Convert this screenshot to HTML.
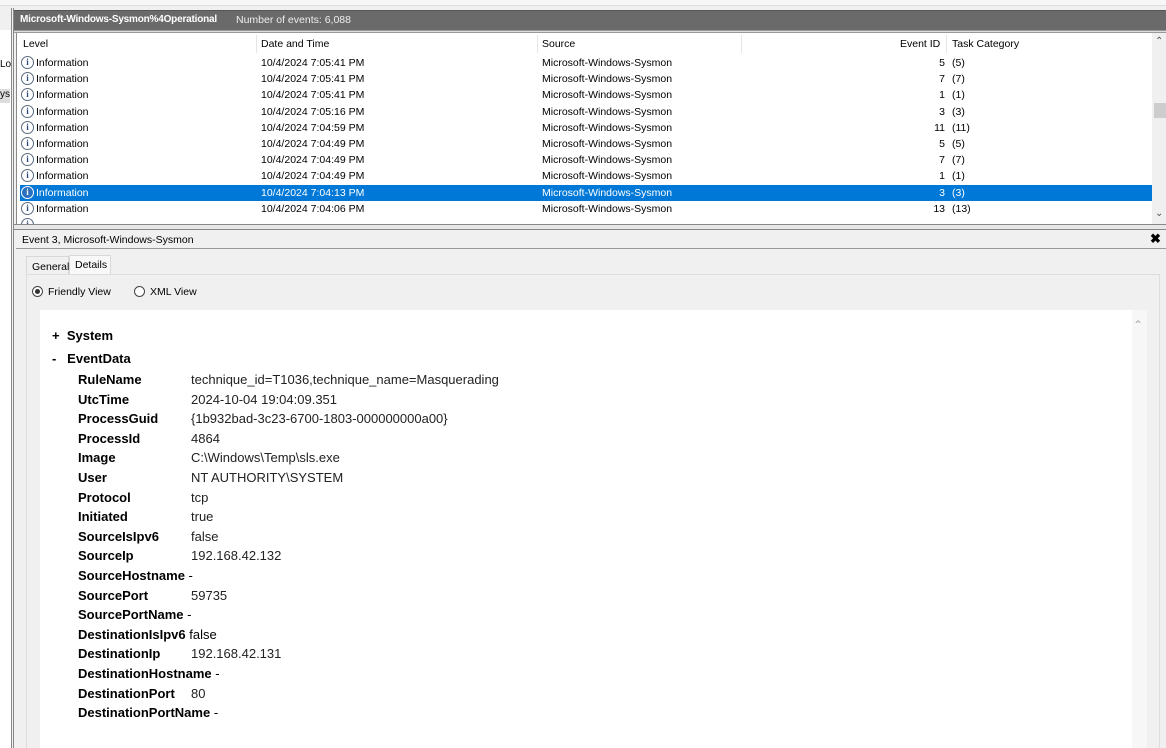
<!DOCTYPE html>
<html><head><style>
*{margin:0;padding:0;box-sizing:border-box}
html,body{width:1166px;height:748px;overflow:hidden}
body{background:#f0f0f0;font-family:"Liberation Sans",sans-serif;position:relative;color:#000}
.a{position:absolute;white-space:nowrap}
.row{position:absolute;left:20px;width:1132px;height:16px;font-size:10.5px;line-height:16px}
.row span{position:absolute}
.ic{position:absolute;left:1px;top:1px;width:13px;height:13px;border:1px solid #5a6a80;border-radius:50%;background:#fff;font:bold 9px/11px "Liberation Serif",serif;text-align:center;color:#2a4a80}
.sel{background:#0078d7;color:#fff}
.sel .ic{background:#2a70c0;border-color:#fff;color:#fff}
.k{position:absolute;left:78px;font-weight:bold;font-size:13px}
.v{position:absolute;left:191px;font-size:13px;color:#222}
</style></head><body>
<div class="a" style="left:0;top:0;width:1166px;height:6px;background:#f7f7f7;border-bottom:1px solid #ddd"></div>
<div class="a" style="left:0;top:30px;width:12px;height:718px;background:#fff"></div>
<div class="a" style="left:0;top:59px;font-size:10px">Lo</div>
<div class="a" style="left:0;top:89px;width:10px;height:14px;background:#ddd;font-size:10px;overflow:hidden">ysr</div>
<div class="a" style="left:11px;top:8px;width:3px;height:740px;border-left:1px solid #888;border-right:1px solid #888"></div>
<div class="a" style="left:14px;top:10px;width:1152px;height:20px;background:#6a6a6a;border-top:1px solid #555"></div>
<div class="a" style="left:20px;top:14px;font-size:10px;font-weight:bold;color:#fff;letter-spacing:-0.2px">Microsoft-Windows-Sysmon%4Operational</div>
<div class="a" style="left:236px;top:14px;font-size:10.5px;color:#eee">Number of events: 6,088</div>
<div class="a" style="left:14px;top:30px;width:1152px;height:3px;border-top:1px solid #999;border-bottom:1px solid #999;background:#ddd"></div>
<div class="a" style="left:16px;top:33px;width:1150px;height:192px;background:#fff;border-left:1px solid #888"></div>
<div class="a" style="left:23px;top:38px;font-size:10.5px">Level</div>
<div class="a" style="left:256px;top:35px;width:1px;height:18px;background:#e5e5e5"></div>
<div class="a" style="left:261px;top:38px;font-size:10.5px">Date and Time</div>
<div class="a" style="left:537px;top:35px;width:1px;height:18px;background:#e5e5e5"></div>
<div class="a" style="left:542px;top:38px;font-size:10.5px">Source</div>
<div class="a" style="left:741px;top:35px;width:1px;height:18px;background:#e5e5e5"></div>
<div class="a" style="left:900px;top:38px;font-size:10.5px">Event ID</div>
<div class="a" style="left:946px;top:35px;width:1px;height:18px;background:#e5e5e5"></div>
<div class="a" style="left:952px;top:38px;font-size:10.5px">Task Category</div>
<div class="a" style="left:1152px;top:33px;width:14px;height:192px;background:#f0f0f0"></div>
<div class="a" style="left:1155px;top:36px;font-size:10px;color:#555">&#8963;</div>
<div class="a" style="left:1154px;top:103px;width:12px;height:15px;background:#cdcdcd"></div>
<div class="a" style="left:1155px;top:208px;font-size:10px;color:#555">&#8964;</div>

<div class="row" style="top:55px"><div class="ic">i</div><span style="left:16px">Information</span><span style="left:241px">10/4/2024 7:05:41 PM</span><span style="left:522px">Microsoft-Windows-Sysmon</span><span style="left:880px;width:45px;text-align:right">5</span><span style="left:932px">(5)</span></div>
<div class="row" style="top:71px"><div class="ic">i</div><span style="left:16px">Information</span><span style="left:241px">10/4/2024 7:05:41 PM</span><span style="left:522px">Microsoft-Windows-Sysmon</span><span style="left:880px;width:45px;text-align:right">7</span><span style="left:932px">(7)</span></div>
<div class="row" style="top:87px"><div class="ic">i</div><span style="left:16px">Information</span><span style="left:241px">10/4/2024 7:05:41 PM</span><span style="left:522px">Microsoft-Windows-Sysmon</span><span style="left:880px;width:45px;text-align:right">1</span><span style="left:932px">(1)</span></div>
<div class="row" style="top:104px"><div class="ic">i</div><span style="left:16px">Information</span><span style="left:241px">10/4/2024 7:05:16 PM</span><span style="left:522px">Microsoft-Windows-Sysmon</span><span style="left:880px;width:45px;text-align:right">3</span><span style="left:932px">(3)</span></div>
<div class="row" style="top:120px"><div class="ic">i</div><span style="left:16px">Information</span><span style="left:241px">10/4/2024 7:04:59 PM</span><span style="left:522px">Microsoft-Windows-Sysmon</span><span style="left:880px;width:45px;text-align:right">11</span><span style="left:932px">(11)</span></div>
<div class="row" style="top:136px"><div class="ic">i</div><span style="left:16px">Information</span><span style="left:241px">10/4/2024 7:04:49 PM</span><span style="left:522px">Microsoft-Windows-Sysmon</span><span style="left:880px;width:45px;text-align:right">5</span><span style="left:932px">(5)</span></div>
<div class="row" style="top:152px"><div class="ic">i</div><span style="left:16px">Information</span><span style="left:241px">10/4/2024 7:04:49 PM</span><span style="left:522px">Microsoft-Windows-Sysmon</span><span style="left:880px;width:45px;text-align:right">7</span><span style="left:932px">(7)</span></div>
<div class="row" style="top:168px"><div class="ic">i</div><span style="left:16px">Information</span><span style="left:241px">10/4/2024 7:04:49 PM</span><span style="left:522px">Microsoft-Windows-Sysmon</span><span style="left:880px;width:45px;text-align:right">1</span><span style="left:932px">(1)</span></div>
<div class="row sel" style="top:185px"><div class="ic">i</div><span style="left:16px">Information</span><span style="left:241px">10/4/2024 7:04:13 PM</span><span style="left:522px">Microsoft-Windows-Sysmon</span><span style="left:880px;width:45px;text-align:right">3</span><span style="left:932px">(3)</span></div>
<div class="row" style="top:201px"><div class="ic">i</div><span style="left:16px">Information</span><span style="left:241px">10/4/2024 7:04:06 PM</span><span style="left:522px">Microsoft-Windows-Sysmon</span><span style="left:880px;width:45px;text-align:right">13</span><span style="left:932px">(13)</span></div>
<div class="row" style="top:217px;height:7px;overflow:hidden"><div class="ic">i</div></div>

<div class="a" style="left:14px;top:224px;width:1152px;height:6px;border-top:1px solid #888;border-bottom:1px solid #888;background:#e8e8e8"></div>
<div class="a" style="left:16px;top:230px;width:1150px;height:19px;background:#f0f0f0;border-bottom:1px solid #999"></div>
<div class="a" style="left:22px;top:234px;font-size:10.5px">Event 3, Microsoft-Windows-Sysmon</div>
<div class="a" style="left:1150px;top:231px;font-size:13px;font-weight:bold">&#10006;</div>
<div class="a" style="left:26px;top:256px;width:43px;height:18px;border:1px solid #d8d8d8;border-bottom:none;font-size:10.5px;padding:4px 0 0 5px">General</div>
<div class="a" style="left:69px;top:255px;width:42px;height:20px;border:1px solid #d8d8d8;border-bottom:none;background:#f8f8f8;font-size:10.5px;padding:3px 0 0 5px">Details</div>
<div class="a" style="left:26px;top:274px;width:1134px;height:474px;border:1px solid #ddd;border-bottom:none;background:#f0f0f0"></div>
<div class="a" style="left:32px;top:286px;width:11px;height:11px;border:1px solid #444;border-radius:50%;background:#fff"><div style="margin:2px;width:5px;height:5px;border-radius:50%;background:#333"></div></div>
<div class="a" style="left:48px;top:286px;font-size:10.5px">Friendly View</div>
<div class="a" style="left:134px;top:286px;width:11px;height:11px;border:1px solid #444;border-radius:50%;background:#fff"></div>
<div class="a" style="left:150px;top:286px;font-size:10.5px">XML View</div>
<div class="a" style="left:40px;top:310px;width:1107px;height:438px;background:#fff"></div>
<div class="a" style="left:1132px;top:310px;width:15px;height:438px;background:#f7f7f7"></div>
<div class="a" style="left:1133px;top:318px;font-size:12px;color:#aaa">&#8963;</div>

<div class="a" style="left:52px;top:328px;font-size:13px;font-weight:bold">+&nbsp;&nbsp;System</div>
<div class="a" style="left:52px;top:351px;font-size:13px;font-weight:bold">-&nbsp;&nbsp;&nbsp;EventData</div>
<div class="a" style="left:0;top:372px;width:700px;height:400px">
<div class="k" style="top:0">RuleName</div><div class="v" style="top:0">technique_id=T1036,technique_name=Masquerading</div>
<div class="k" style="top:19.6px">UtcTime</div><div class="v" style="top:19.6px">2024-10-04 19:04:09.351</div>
<div class="k" style="top:39.2px">ProcessGuid</div><div class="v" style="top:39.2px">{1b932bad-3c23-6700-1803-000000000a00}</div>
<div class="k" style="top:58.8px">ProcessId</div><div class="v" style="top:58.8px">4864</div>
<div class="k" style="top:78.4px">Image</div><div class="v" style="top:78.4px">C:\Windows\Temp\sls.exe</div>
<div class="k" style="top:98px">User</div><div class="v" style="top:98px">NT AUTHORITY\SYSTEM</div>
<div class="k" style="top:117.6px">Protocol</div><div class="v" style="top:117.6px">tcp</div>
<div class="k" style="top:137.2px">Initiated</div><div class="v" style="top:137.2px">true</div>
<div class="k" style="top:156.8px">SourceIsIpv6</div><div class="v" style="top:156.8px">false</div>
<div class="k" style="top:176.4px">SourceIp</div><div class="v" style="top:176.4px">192.168.42.132</div>
<div class="k" style="top:196px">SourceHostname <span style="font-weight:normal">-</span></div>
<div class="k" style="top:215.6px">SourcePort</div><div class="v" style="top:215.6px">59735</div>
<div class="k" style="top:235.2px">SourcePortName <span style="font-weight:normal">-</span></div>
<div class="k" style="top:254.8px">DestinationIsIpv6 <span style="font-weight:normal">false</span></div>
<div class="k" style="top:274.4px">DestinationIp</div><div class="v" style="top:274.4px">192.168.42.131</div>
<div class="k" style="top:294px">DestinationHostname <span style="font-weight:normal">-</span></div>
<div class="k" style="top:313.6px">DestinationPort</div><div class="v" style="top:313.6px">80</div>
<div class="k" style="top:333.2px">DestinationPortName <span style="font-weight:normal">-</span></div>
</div>
</body></html>
